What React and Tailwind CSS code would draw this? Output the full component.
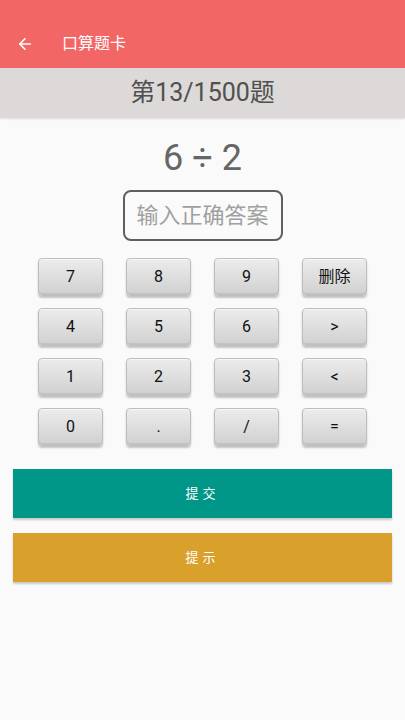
import { ArrowLeft } from "lucide-react"

const keys = ["7", "8", "9", "删除", "4", "5", "6", ">", "1", "2", "3", "<", "0", ".", "/", "="]

function Key({ label }) {
    return <button className="h-[38px] w-[65px] rounded-[4px] border border-[#bdbdbd] bg-gradient-to-b from-[#ececec] via-[#dedede] to-[#d0d0d0] text-[16px] text-[#111] shadow-[0_2px_2px_rgba(0,0,0,0.22),inset_0_1px_0_#f8f8f8,inset_0_-2px_0_#c2c2c2]">
        {label}
    </button>
}

export default function App() {
    return <main className="flex min-h-[720px] w-[405px] flex-col bg-[#fafafa] font-['Roboto','Noto_Sans_CJK_SC',sans-serif]">
        <header className="flex h-[68px] items-end bg-[#f36666] pb-[15px] text-white">
            <ArrowLeft className="ml-[16px] h-[18px] w-[18px]" strokeWidth={2.2} />
            <h1 className="ml-[28px] text-[16px] leading-[18px]">口算题卡</h1>
        </header>
        <section className="flex h-[50px] items-center justify-center bg-[#dcd9d8] shadow-[0_1px_2px_rgba(0,0,0,0.12)]">
            <span className="text-[25px] text-[#505050]">第13/1500题</span>
        </section>
        <div className="mt-[18px] text-center text-[36px] leading-[44px] text-[#666]">6 ÷ 2</div>
        <div className="mx-auto mt-[10px] flex h-[51px] w-[160px] items-center justify-center rounded-[8px] border-2 border-[#5f5f5f]">
            <span className="text-[22px] text-[#a0a0a0]">输入正确答案</span>
        </div>
        <section className="mx-auto mt-[17px] grid grid-cols-[repeat(4,65px)] gap-x-[23px] gap-y-[12px]">
            {keys.map((k) => <Key key={k} label={k} />)}
        </section>
        <section className="mx-[13px] mt-[23px] flex flex-col gap-[15px]">
            <button className="h-[49px] bg-[#009688] text-[13px] tracking-[4px] text-white shadow-[0_2px_2px_rgba(0,0,0,0.2)]">提交</button>
            <button className="h-[49px] bg-[#d9a02c] text-[13px] tracking-[4px] text-white shadow-[0_2px_2px_rgba(0,0,0,0.2)]">提示</button>
        </section>
    </main>
}
